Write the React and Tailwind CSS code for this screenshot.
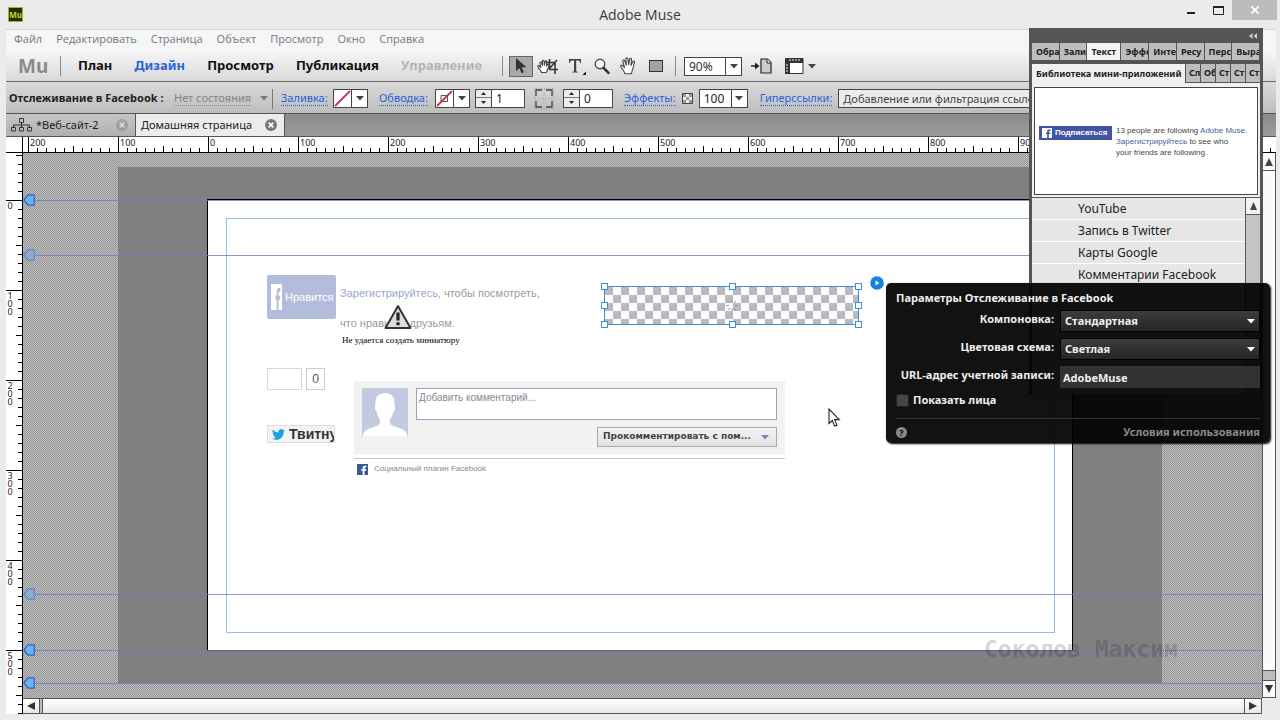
import React from "react";

const MENU = ["Файл", "Редактировать", "Страница", "Объект", "Просмотр", "Окно", "Справка"];
const H_LABELS = [200, 100, 0, 100, 200, 300, 400, 500, 600, 700, 800, 900, 1000, 1100];
const V_LABELS = [0, 100, 200, 300, 400, 500];
const PANEL_TABS = ["Обра", "Зали", "Текст", "Эффе", "Инте", "Ресу", "Перс", "Выра"];
const SUB_TABS = ["Сл", "Об", "Ст", "Ст", "Ст"];
const WIDGETS = ["YouTube", "Запись в Twitter", "Карты Google", "Комментарии Facebook"];

function Down({ className = "text-[#444]" }) {
  return (
    <svg className={className} width="8" height="5" viewBox="0 0 8 5" aria-hidden="true">
      <path d="M0 0h8L4 4.6z" fill="currentColor" />
    </svg>
  );
}

function TitleBar() {
  return (
    <header className="grid h-[29px] grid-cols-[1fr_auto_1fr] items-center bg-[#ebebeb]">
      <div className="pl-2">
        <div className="flex h-[15px] w-[15px] items-center justify-center border border-[#a3b526] bg-[#262c02] text-[8px] font-bold leading-none text-[#c5d92b]">
          Mu
        </div>
      </div>
      <h1 className="font-['Open_Sans',sans-serif] text-[14px] leading-[18px] text-[#3a3a3a]">Adobe Muse</h1>
      <div className="flex h-full items-start justify-end pr-[3px]">
        <button aria-label="Свернуть" className="flex h-5 w-[26px] items-center justify-center">
          <svg width="9" height="10" viewBox="0 0 9 10"><path d="M0 7h8v2H0z" fill="#222" /></svg>
        </button>
        <button aria-label="Развернуть" className="flex h-5 w-[28px] items-center justify-center">
          <svg width="11" height="9" viewBox="0 0 11 9"><path d="M.5 1h10v7.5H.5z" fill="none" stroke="#222" /><path d="M0 0h11v2H0z" fill="#222" /></svg>
        </button>
        <button aria-label="Закрыть" className="flex h-5 w-[45px] items-center justify-center bg-[#bcbcbc]">
          <svg width="8" height="8" viewBox="0 0 8 8"><path d="M.5.5l7 7M7.500.5l-7 7" stroke="#fff" strokeWidth="1.6" /></svg>
        </button>
      </div>
    </header>
  );
}

function HandIcon() {
  return (
    <svg width="17" height="18" viewBox="0 0 17 18" fill="#fff" stroke="#444" strokeWidth="1.1" strokeLinejoin="round" strokeLinecap="round">
      <path d="M5 16.800C4.500 14.500 2.600 12.600.8 9.400c-.5-1.100.9-1.800 1.800-.8l1.900 2L2.800 4.200c-.3-1.300 1.400-1.700 1.800-.5l1.700 4.500L5.900 2c0-1.400 1.800-1.500 2 0l.7 5.800 1-5.600c.3-1.300 2-1 1.900.3l-.5 6 1.800-3.700c.6-1.200 2.100-.6 1.700.6-.8 2.600-1.100 4.600-1.800 6.900-.5 1.500-1.200 2.800-1.200 4.500z" />
    </svg>
  );
}

function Toolbar() {
  return (
    <div className="flex h-[33px] items-center border-b border-[#6b6b6b] bg-linear-to-b from-[#f8f8f8] to-[#d9d9d9] pt-[2px] text-[13px] font-bold text-[#111]">
      <div className="w-[54px] shrink-0 pl-3 text-[19px] leading-6 text-[#8a8a8a]">Mu</div>
      <div className="mr-[17px] h-5 w-px shrink-0 bg-[#8a8a8a]" />
      <nav className="flex w-[424px] shrink-0 justify-between pr-[20px]">
        <button>План</button>
        <button className="text-[#2a62d8]">Дизайн</button>
        <button>Просмотр</button>
        <button>Публикация</button>
        <button className="text-[#b4b4b4]" disabled>Управление</button>
      </nav>
      <div className="h-5 w-px shrink-0 bg-[#8a8a8a]" />
      <button aria-label="Выделение" className="ml-[6px] flex h-[21px] w-6 shrink-0 items-center justify-center border border-[#666] bg-[#a9a9a9]">
        <svg width="12" height="16" viewBox="0 0 12 16"><path d="M1 0v13l3.300-3 2.200 5.200 2.400-1-2.200-5H11.500z" fill="#333" /></svg>
      </button>
      <button aria-label="Обрезка" className="ml-1 w-[21px] shrink-0">
        <svg width="21" height="18" viewBox="0 0 21 18" fill="none" stroke="#444" strokeWidth="1.100" strokeLinejoin="round">
          <path fill="#fff" d="M4.500 15.500C4 13.500 2 12.500.8 9.500c-.3-.9.9-1.300 1.600-.5l1.400 1.500-.8-4.600c-.2-1 1.200-1.300 1.500-.3l1 3-.1-4.500c0-1.100 1.400-1.100 1.600 0l.4 4.100.9-3.700c.3-1 1.600-.7 1.500.3l-.4 4.400 1.400-1.700c.8-.7 1.700 0 1.300.9-.9 2.200-1.600 5-2.900 7.100z" />
          <path d="M12.500 2v10.500H21M9.500 5.500h8.500V17M20 3l-7 8" stroke="#333" strokeWidth="1.500" />
        </svg>
      </button>
      <button aria-label="Текст" className="ml-[10px] flex w-[19px] shrink-0 items-end">
        <svg width="19" height="19" viewBox="0 0 19 19" fill="#444"><path d="M1 2h12v4h-.8c-.3-2-1-2.600-2.700-2.600H8.200v10.200c0 1 .5 1.300 1.800 1.400v.6H4.200V15c1.300-.1 1.800-.4 1.800-1.400V3.400H4.600C2.800 3.400 2.100 4 1.800 6H1z" /><path d="M18 14.500V18h-3.500z" fill="#111" /></svg>
      </button>
      <button aria-label="Масштаб" className="ml-[7px] w-4 shrink-0">
        <svg width="16" height="17" viewBox="0 0 16 17" fill="none"><circle cx="6" cy="6" r="4.700" stroke="#444" strokeWidth="1.400" fill="#f8f8f8" /><path d="M9.500 9.800l5 5" stroke="#333" strokeWidth="2.600" strokeLinecap="round" /></svg>
      </button>
      <button aria-label="Рука" className="ml-[10px] w-[17px] shrink-0"><HandIcon /></button>
      <button aria-label="Прямоугольник" className="ml-3 h-3 w-[14px] shrink-0 border border-[#333] bg-[#a2a2a2]" />
      <div className="ml-3 h-5 w-px shrink-0 bg-[#8a8a8a]" />
      <button aria-label="Масштаб страницы" className="ml-2 flex h-[19px] w-[58px] shrink-0 border border-[#444] bg-white text-[12px] font-normal leading-[17px] text-[#333]">
        <span className="flex-1 pl-1 text-left">90%</span>
        <span className="flex h-full w-4 items-center justify-center border-l border-[#444]"><Down /></span>
      </button>
      <button aria-label="Поместить" className="ml-[9px] shrink-0">
        <svg width="21" height="16" viewBox="0 0 21 16"><path d="M0 8h5" stroke="#222" strokeWidth="1.500" /><path d="M4 4.500L8.500 8 4 11.500z" fill="#222" /><path d="M10 1h6.500L20 4.500V15H10z" fill="#ccc" stroke="#222" strokeWidth="1.200" /><path d="M16 1v4h4" fill="#fff" stroke="#222" /></svg>
      </button>
      <button aria-label="Линейки" className="ml-[13px] flex shrink-0 items-center gap-1">
        <svg width="19" height="16" viewBox="0 0 19 16"><path d="M.5.5h17.500v15H.5z" fill="#fff" stroke="#333" /><path d="M0 0h18v5H5v11H0z" fill="#333" /><path d="M5 1v2M8 1v2M11 1v2M14 1v2M1 7h2M1 10h2M1 13h2" stroke="#eee" /></svg>
        <Down />
      </button>
    </div>
  );
}

function ColorWell({ label, stroke }) {
  return (
    <button aria-label={label} className="flex h-[19px] w-[35px] shrink-0 border border-[#444] bg-white">
      <svg width="17" height="17" viewBox="0 0 17 17">
        {stroke && <path d="M5 5.500h6.500v6H5z" fill="none" stroke="#555" />}
        <path d="M1 16L16 1" stroke="#c8324a" strokeWidth="1.800" />
      </svg>
      <span className="flex h-full flex-1 items-center justify-center border-l border-[#444]"><Down /></span>
    </button>
  );
}

function Stepper({ label, value }) {
  return (
    <div className="flex h-[19px] w-[50px] shrink-0 border border-[#444] bg-white">
      <div className="flex w-4 flex-col border-r border-[#444] bg-[#ededed]">
        <button aria-label={label + ": больше"} className="flex h-2 items-center justify-center border-b border-[#777]">
          <svg width="5" height="3" viewBox="0 0 5 3"><path d="M0 3h5L2.500 0z" fill="#222" /></svg>
        </button>
        <button aria-label={label + ": меньше"} className="flex flex-1 items-center justify-center">
          <svg width="5" height="3" viewBox="0 0 5 3"><path d="M0 0h5L2.500 3z" fill="#222" /></svg>
        </button>
      </div>
      <input aria-label={label} defaultValue={value} className="min-w-0 flex-1 pl-1 text-[12px] text-[#222]" />
    </div>
  );
}

const LINK = "shrink-0 border-b border-dotted border-[#2a62d8] leading-[14px] text-[#2a62d8]";

function PropertyBar() {
  return (
    <div className="flex h-8 items-center overflow-hidden border-b border-[#555] bg-linear-to-b from-[#dadada] to-[#bdbdbd] pt-[2px] text-[11px] whitespace-nowrap">
      <div className="w-[168px] shrink-0 pl-[3px] font-bold text-[#222]">Отслеживание в Facebook :</div>
      <button className="flex w-[98px] shrink-0 items-center justify-between pr-1 text-[#858585]">
        <span className="border-b border-dotted border-[#858585] leading-[14px]">Нет состояния</span>
        <Down className="text-[#777]" />
      </button>
      <div className="h-5 w-px shrink-0 bg-[#777]" />
      <div className="flex w-[106px] shrink-0 items-center justify-between pr-[11px] pl-2">
        <a href="#fill" className={LINK}>Заливка:</a>
        <ColorWell label="Заливка" />
      </div>
      <div className="flex w-[96px] shrink-0 items-center justify-between pr-[5px]">
        <a href="#stroke" className={LINK}>Обводка:</a>
        <ColorWell label="Обводка" stroke />
      </div>
      <Stepper label="Толщина обводки" value="1" />
      <button aria-label="Углы" className="mx-[9px] shrink-0">
        <svg width="20" height="21" viewBox="0 0 20 21" fill="none" stroke="#444" strokeWidth="1.300"><path d="M2 8V2h6M12 2h6v6M2 13v6h6M18 13v6h-6" /><path d="M0 .5h20M0 20.500h20M.5 0v21M19.500 0v21M1 10.500h18M10 1v19" stroke="#aaa" strokeWidth="1" strokeDasharray="1 1" /></svg>
      </button>
      <Stepper label="Радиус угла" value="0" />
      <a href="#effects" className={LINK + " ml-[11px]"}>Эффекты:</a>
      <svg className="ml-[6px] shrink-0" width="11" height="11" viewBox="0 0 11 11"><path d="M.5.5h10v10H.5z" fill="#eee" stroke="#444" /><path d="M1 1h3v3H1zM7 1h3v3H7zM4 4h3v3H4zM1 7h3v3H1zM7 7h3v3H7z" fill="#999" /></svg>
      <div className="ml-[6px] flex h-[19px] w-[49px] shrink-0 border border-[#444] bg-white">
        <input aria-label="Непрозрачность" defaultValue="100" className="min-w-0 flex-1 pl-1 text-[12px] text-[#222]" />
        <button aria-label="Непрозрачность: список" className="flex h-full w-4 items-center justify-center border-l border-[#444]"><Down /></button>
      </div>
      <a href="#links" className={LINK + " ml-3"}>Гиперссылки:</a>
      <input aria-label="Гиперссылки" placeholder="Добавление или фильтрация ссылок" className="mr-[222px] ml-[6px] h-[19px] min-w-[200px] flex-1 border border-[#444] bg-[#ebebeb] px-1 text-[11px] placeholder:text-[#444]" />
    </div>
  );
}

function CloseDot({ faded }) {
  return (
    <svg width="12" height="12" viewBox="0 0 12 12" className={faded ? "opacity-40" : ""}>
      <circle cx="6" cy="6" r="6" fill="#777" />
      <path d="M3.700 3.700l4.600 4.600M8.300 3.700L3.700 8.300" stroke="#fff" strokeWidth="1.700" />
    </svg>
  );
}

function DocumentTabs() {
  return (
    <div className="flex h-[23px] border-b border-[#555] bg-linear-to-b from-[#8a8a8a] to-[#9c9c9c] text-[11px] text-[#222]">
      <div className="flex w-[130px] items-center border-r border-[#555] bg-linear-to-b from-[#c6c6c6] to-[#b0b0b0] px-[5px]">
        <svg width="21" height="14" viewBox="0 0 21 14" fill="none" stroke="#333"><path d="M8.500.5h4v4h-4zM.5 9.500h4v3.500h-4zM8.500 9.500h4v3.500h-4zM16.500 9.500h4v3.500h-4zM10.500 4.500v5M2.500 9.500V7h16v2.500" /></svg>
        <button className="ml-1 flex-1 text-left">*Веб-сайт-2</button>
        <button aria-label="Закрыть *Веб-сайт-2" className="mr-[2px]"><CloseDot faded /></button>
      </div>
      <div className="flex w-[149px] items-center border-r border-[#555] bg-[#ececec] px-[5px]">
        <button className="flex-1 text-left">Домашняя страница</button>
        <button aria-label="Закрыть домашнюю страницу" className="mr-[2px]"><CloseDot /></button>
      </div>
    </div>
  );
}

function HorizontalRuler() {
  return (
    <div className="flex h-4 overflow-hidden border-b border-black bg-white">
      <div className="w-[17px] shrink-0 border-r border-black" />
      <div className="w-[5px] shrink-0" />
      {H_LABELS.map((n, k) => (
        <div key={k} className="flex shrink-0 items-end">
          {Array.from({ length: 10 }, (_, i) => (
            <div key={i} className={"w-[9px] shrink-0 border-l border-black " + (i === 0 ? "h-[15px]" : i === 5 ? "h-[6px]" : "h-1")}>
              {i === 0 && <span className="block pl-px text-[9px] leading-[11px] text-[#222]">{n}</span>}
            </div>
          ))}
        </div>
      ))}
    </div>
  );
}

function VTick({ i, label }) {
  return (
    <div className="flex h-[9px] shrink-0 justify-end">
      <div className={"border-t border-black " + (label !== undefined ? "w-4" : i === 5 ? "w-[6px]" : "w-1")}>
        {label !== undefined && (
          <div className="flex w-2 flex-col pt-px text-center text-[9px] leading-2 text-[#222]">
            {String(label).split("").map((c, k) => <span key={k}>{c}</span>)}
          </div>
        )}
      </div>
    </div>
  );
}

function VerticalRuler() {
  return (
    <div className="relative w-[17px] shrink-0 overflow-hidden border-r border-black bg-white">
      <div className="absolute inset-0 flex flex-col pt-[2px]">
        {[5, 6, 7, 8, 9].map((i) => <VTick key={i} i={i} />)}
        {V_LABELS.map((n) =>
          Array.from({ length: 10 }, (_, i) => <VTick key={n + "-" + i} i={i} label={i === 0 ? n : undefined} />)
        )}
      </div>
    </div>
  );
}

function Guide({ className, faded }) {
  return (
    <div className={"absolute inset-x-0 flex h-3 items-center " + className}>
      <svg width="12" height="12" viewBox="0 0 12 12" className={"shrink-0 " + (faded ? "opacity-50" : "")}>
        <path d="M.8 6L5 .8h6.200v10.400H5z" fill="#6bb4f0" stroke="#2a62d0" strokeWidth="1.200" />
      </svg>
      <div className="h-px flex-1 bg-[#6a7ccc]/80" />
    </div>
  );
}

function FacebookMark({ className, fill = "#3b5998", letter = "#fff" }) {
  return (
    <svg className={"shrink-0 " + className} viewBox="0 0 12 12" preserveAspectRatio="none" aria-hidden="true">
      <path d="M0 0h12v12H0z" fill={fill} />
      <path d="M6.200 12V7.300H4.800V5.400h1.400V4.200C6.200 2.600 7.100 1.800 8.600 1.800h1.600v1.900H9.200c-.8 0-1 .3-1 .9v.8h1.900l-.3 1.900H8.200V12z" fill={letter} />
    </svg>
  );
}

const HANDLES = [
  "-left-1 -top-1", "left-[124px] -top-1", "-right-1 -top-1",
  "-left-1 top-[15px]", "-right-1 top-[15px]",
  "-left-1 -bottom-1", "left-[124px] -bottom-1", "-right-1 -bottom-1",
];

function PageArea() {
  return (
    <div className="absolute top-[46px] left-[184px] h-[452px] w-[866px] border border-black bg-white font-['Liberation_Sans',Arial,sans-serif]">
      <div className="absolute top-[18px] left-[18px] h-[415px] w-[829px] border border-[#98bde4]" />

      <button className="absolute top-[75px] left-[59px] flex h-11 w-[69px] items-center gap-[3px] rounded-xs bg-[#b4bcdc] pl-1 text-[11px] text-white">
        <FacebookMark className="h-[26px] w-[11px]" fill="#ffffff" letter="#b4bcdc" />
        Нравится
      </button>
      <p className="absolute top-[78px] left-[132px] font-['Liberation_Sans',Arial,sans-serif] text-[11px] leading-[30px] whitespace-nowrap text-[#999]">
        <a href="#signup" className="text-[#99a5cc]">Зарегистрируйтесь</a>, чтобы посмотреть,
        <br />что нравится друзьям.
      </p>
      <svg className="absolute top-[104px] left-[176px]" width="28" height="26" viewBox="0 0 28 26">
        <path d="M14 2L26.500 24H1.500z" fill="#ddd" stroke="#333" strokeWidth="2" strokeLinejoin="round" />
        <path d="M12.400 8.500h3.200v8h-3.200zM12.400 18.200h3.200v3h-3.200z" fill="#222" />
      </svg>
      <p className="absolute top-[134px] left-[134px] font-['Liberation_Serif',serif] text-[9px] leading-[12px] whitespace-nowrap text-black">Не удается создать миниатюру</p>

      <div className="absolute top-[168px] left-[59px] flex gap-1">
        <div className="h-[22px] w-[35px] border border-[#d8d8d8]" />
        <div className="h-[22px] w-[19px] border border-[#ccc] text-center text-[12px] leading-5 text-[#555]">0</div>
      </div>

      <button className="absolute top-[225px] left-[59px] flex h-[18px] w-[68px] items-center gap-1 overflow-hidden border border-[#ddd] bg-[#f3f3f3] pl-1 text-[14px] font-bold text-[#333]">
        <svg width="13" height="11" viewBox="0 0 24 20" className="shrink-0"><path d="M24 2.400a10 10 0 0 1-2.800.8A5 5 0 0 0 23.300.5a10 10 0 0 1-3.100 1.200 4.900 4.900 0 0 0-8.400 4.500A14 14 0 0 1 1.700 1a4.900 4.900 0 0 0 1.500 6.600A4.900 4.900 0 0 1 1 7v.1a4.900 4.900 0 0 0 4 4.800 5 5 0 0 1-2.300.1 4.900 4.900 0 0 0 4.600 3.400A9.900 9.900 0 0 1 0 17.500a14 14 0 0 0 7.500 2.200c9.200 0 14.300-7.700 14-14.600A10 10 0 0 0 24 2.400z" fill="#1da1dc" /></svg>
        Твитну
      </button>

      <section className="absolute top-[181px] left-[146px] w-[431px]">
        <div className="flex h-[73px] gap-2 bg-[#f2f2f2] pt-[7px] pr-[8px] pl-[8px]">
          <svg width="46" height="48" viewBox="0 0 46 48" className="shrink-0">
            <path d="M0 0h46v48H0z" fill="#c3c9e0" />
            <path d="M23 5c6 0 9.500 3.500 9.500 9.500 0 3 .6 4 .5 6-.2 2-1.500 2.500-2 4.500-.5 3-2 5-3 6.500-.2 3 0 5 3 6.300C36 40 43 41 45 46v2H1v-2c2-5 9-6 14-8.200 3-1.300 3.200-3.300 3-6.300-1-1.500-2.500-3.500-3-6.500-.5-2-1.800-2.500-2-4.500-.1-2 .5-3 .5-6C13.500 8.500 17 5 23 5z" fill="#fff" />
          </svg>
          <div className="flex flex-1 flex-col items-end gap-[7px]">
            <textarea aria-label="Комментарий" placeholder="Добавить комментарий..." className="block h-8 w-full resize-none border border-[#9a9fc0] bg-white px-[2px] py-[3px] text-[10px] leading-3 placeholder:text-[#888]" />
            <button className="flex h-5 w-[180px] items-center justify-between border border-[#aaa] bg-linear-to-b from-[#f4f4f4] to-[#e2e2e2] pr-[7px] pl-[5px] font-['DejaVu_Sans',sans-serif] text-[9px] font-bold whitespace-nowrap text-[#444]">
              Прокомментировать с пом...
              <Down className="shrink-0 text-[#7d84b0]" />
            </button>
          </div>
        </div>
        <div className="mt-1 flex items-center gap-[6px] border-t border-[#c8c8c8] pt-1 pl-[3px] text-[8px] leading-3 text-[#888]">
          <FacebookMark className="h-[11px] w-[11px]" />
          Социальный плагин Facebook
        </div>
      </section>

      <div className="absolute top-[86px] left-[396px] h-[39px] w-[255px] border border-[#3f8fd0] bg-[repeating-conic-gradient(#fff_0_25%,#b9b9c1_0_50%)] bg-size-[16px_16px]">
        {HANDLES.map((h) => (
          <span key={h} className={"absolute h-[7px] w-[7px] border border-[#3f8fd0] bg-white " + h} />
        ))}
        <svg className="absolute top-[12px] left-[121px]" width="12" height="13" viewBox="0 0 12 13"><path d="M6 1v3M6 9v3M0 6.500h3M9 6.500h3M2 2l2 2M8 9l2 2M10 2L8 4M4 9l-2 2" stroke="#999" /></svg>
      </div>
      <button aria-label="Параметры виджета" className="absolute top-[76px] left-[662px]">
        <svg width="14" height="14" viewBox="0 0 14 14"><circle cx="7" cy="7" r="6.800" fill="#1583de" /><path d="M5.500 4.400L9.500 7l-4 2.600z" fill="#fff" /></svg>
      </button>
      <svg className="absolute top-[208px] left-[620px]" width="14" height="20" viewBox="0 0 14 20">
        <path d="M1 1v14.500l3.300-3 2.300 5.600 2.400-1-2.300-5.500h4.600z" fill="#fff" stroke="#222" strokeWidth="1.100" />
      </svg>
    </div>
  );
}

function Workspace() {
  return (
    <main className="relative min-w-0 flex-1 overflow-hidden bg-[repeating-conic-gradient(#c2c2c2_0_25%,#929292_0_50%)] bg-size-[2px_2px]">
      <div className="absolute top-[14px] left-[95px] h-[516px] w-[1044px] bg-[#808080]" />
      <PageArea />
      <Guide className="top-[41px]" />
      <Guide className="top-[96px]" faded />
      <Guide className="top-[435px]" faded />
      <Guide className="top-[491px]" />
      <Guide className="top-[524px]" />
      <p className="absolute top-[482px] left-[961px] font-['DejaVu_Sans_Mono',monospace] text-[23px] leading-7 font-bold whitespace-nowrap text-black/18">Соколов&nbsp;Максим</p>
    </main>
  );
}

function Scroller() {
  return (
    <div className="flex w-[14px] shrink-0 flex-col border-x border-[#555] bg-[#fafafa]">
      <button aria-label="Вверх" className="flex h-[18px] items-center justify-center border-b border-[#555]">
        <svg width="8" height="8" viewBox="0 0 8 8"><path d="M4 0l4 8H0z" fill="#444" /></svg>
      </button>
      <div className="flex-1" />
      <div className="h-[10px] border-t border-[#555] bg-[#bdbdbd]" />
      <button aria-label="Вниз" className="flex h-[18px] items-center justify-center border-y border-[#555]">
        <svg width="8" height="8" viewBox="0 0 8 8"><path d="M4 8L0 0h8z" fill="#333" /></svg>
      </button>
    </div>
  );
}

function BottomScroller() {
  return (
    <div className="flex h-4 border-y border-[#555] bg-linear-to-b from-white to-[#e8e8e8]">
      <button aria-label="Влево" className="flex w-4 items-center justify-center">
        <svg width="8" height="8" viewBox="0 0 8 8"><path d="M0 4l8-4v8z" fill="#333" /></svg>
      </button>
      <div className="w-[4px] border-x border-[#555] bg-[#bbb]" />
      <div className="flex-1" />
      <button aria-label="Вправо" className="flex w-[18px] items-center justify-center border-x border-[#555]">
        <svg width="8" height="8" viewBox="0 0 8 8"><path d="M8 4L0 0v8z" fill="#333" /></svg>
      </button>
    </div>
  );
}

function LibraryPanel() {
  return (
    <aside className="absolute top-7 right-[17px] flex h-[366px] w-[234px] flex-col border-x-[3px] border-[#555] bg-[#e6e6e6] text-[9px] font-bold text-[#222]">
      <div className="flex h-[15px] shrink-0 items-center justify-end bg-[#555] pr-[3px]">
        <svg width="8" height="6" viewBox="0 0 8 6"><path d="M3.500 0v6L0 3zM8 0v6L4.500 3z" fill="#ccc" /></svg>
      </div>
      <div className="flex h-[21px] shrink-0 border-b-4 border-[#555] bg-[#bdbdbd]">
        {PANEL_TABS.map((t) => (
          <button key={t} className={"h-[17px] overflow-hidden border-r border-[#555] text-left whitespace-nowrap " + (t === "Текст" ? "w-[34px] bg-[#f4f4f4] pl-1" : "min-w-0 flex-1 pl-1")}>{t}</button>
        ))}
      </div>
      <div className="flex h-[19px] shrink-0">
        <button className="w-[153px] shrink-0 bg-[#f0f0f0] pl-1 text-left whitespace-nowrap">Библиотека мини-приложений</button>
        {SUB_TABS.map((t, i) => (
          <button key={i} className="min-w-0 flex-1 overflow-hidden border-b border-l border-[#555] bg-[#bdbdbd] pl-[3px] text-left whitespace-nowrap">{t}</button>
        ))}
      </div>
      <div className="h-[115px] shrink-0 border-b border-[#555] bg-[#f0f0f0] px-[2px] pt-1 pb-[2px] font-['Liberation_Sans',Arial,sans-serif] font-normal">
        <div className="flex h-[108px] items-center gap-1 border border-[#444] bg-white pl-1 whitespace-nowrap">
          <button className="mb-4 flex h-[14px] w-[73px] shrink-0 items-center gap-[3px] bg-[#4155a4] pl-[3px] text-[8px] font-bold text-white">
            <FacebookMark className="h-[10px] w-[10px]" fill="#ffffff" letter="#4155a4" />
            Подписаться
          </button>
          <p className="text-[8px] leading-[11px] text-[#444]">
            13 people are following <a href="#muse" className="text-[#4a5da0]">Adobe Muse.</a><br />
            <a href="#join" className="text-[#4a5da0]">Зарегистрируйтесь</a> to see who<br />
            your friends are following.
          </p>
        </div>
      </div>
      <div className="flex min-h-0 flex-1 overflow-hidden">
        <ul className="min-w-0 flex-1 text-[12px] font-normal">
          {WIDGETS.map((w) => (
            <li key={w} className="h-[22px] border-b border-white pl-[46px] leading-[21px]">{w}</li>
          ))}
        </ul>
        <div className="w-[15px] shrink-0 border-l border-[#555] bg-[#c4c4c4]">
          <button aria-label="Прокрутить вверх" className="flex h-[17px] w-full items-center justify-center border-b border-[#555] bg-[#f2f2f2]">
            <svg width="7" height="8" viewBox="0 0 7 8"><path d="M3.500 0L7 8H0z" fill="#444" /></svg>
          </button>
        </div>
      </div>
    </aside>
  );
}

const DARK_SELECT = "h-[22px] w-full appearance-none border border-black bg-linear-to-b from-[#3c3c3c] to-[#262626] pl-1 text-[11px] font-bold text-[#eee]";

function OptionsPopup() {
  return (
    <form className="absolute top-[283px] left-[886px] w-[384px] rounded-[5px] bg-black/93 px-[10px] pt-[6px] pb-px text-[11px] font-bold text-[#eee] shadow-[1px_1px_2px_#000000]">
      <h2 className="leading-[18px]">Параметры Отслеживание в Facebook</h2>
      <div className="mt-[3px] grid grid-cols-[158px_1fr] items-center gap-x-[6px] gap-y-[6px]">
        <label htmlFor="layout" className="pb-1 text-right whitespace-nowrap">Компоновка:</label>
        <div className="relative">
          <select id="layout" className={DARK_SELECT}><option>Стандартная</option></select>
          <Down className="pointer-events-none absolute top-[9px] right-[5px] text-white" />
        </div>
        <label htmlFor="scheme" className="pb-1 text-right whitespace-nowrap">Цветовая схема:</label>
        <div className="relative">
          <select id="scheme" className={DARK_SELECT}><option>Светлая</option></select>
          <Down className="pointer-events-none absolute top-[9px] right-[5px] text-white" />
        </div>
        <label htmlFor="account" className="pb-1 text-right whitespace-nowrap">URL-адрес учетной записи:</label>
        <input id="account" defaultValue="AdobeMuse" className="h-[22px] w-full min-w-0 bg-[#323232] pl-[3px] text-[11px] font-bold text-[#eee]" />
      </div>
      <label className="mt-[3px] flex h-[18px] items-center gap-1">
        <input type="checkbox" className="h-[13px] w-[13px] appearance-none rounded-xs border border-[#222] bg-[#464646]" />
        Показать лица
      </label>
      <div className="mt-[9px] flex h-6 items-center justify-between border-t border-[#333] pt-[3px] text-[#8a8a8a]">
        <button type="button" aria-label="Справка" className="flex h-[11px] w-[11px] items-center justify-center rounded-full bg-[#8a8a8a] text-[9px] leading-none text-black">?</button>
        <a href="#terms">Условия использования</a>
      </div>
    </form>
  );
}

export default function App() {
  return (
    <div className="relative flex min-h-screen flex-col overflow-hidden bg-[#ebebeb] font-['Noto_Sans','Open_Sans',sans-serif]">
      <TitleBar />
      <div className="mr-1 ml-[6px] flex flex-1 flex-col">
        <nav className="flex h-[20px] items-center gap-[14px] border-t border-[#d8d8d8] bg-[#f5f6f7] pl-2 font-['Open_Sans',sans-serif] text-[11px] text-[#777]">
          {MENU.map((m) => <button key={m}>{m}</button>)}
        </nav>
        <Toolbar />
        <PropertyBar />
        <DocumentTabs />
        <HorizontalRuler />
        <div className="mb-[6px] flex flex-1">
          <VerticalRuler />
          <div className="flex min-w-0 flex-1 flex-col">
            <Workspace />
            <BottomScroller />
          </div>
          <div className="flex flex-col pb-4">
            <div className="flex flex-1"><Scroller /></div>
          </div>
        </div>
      </div>
      <LibraryPanel />
      <OptionsPopup />
    </div>
  );
}
